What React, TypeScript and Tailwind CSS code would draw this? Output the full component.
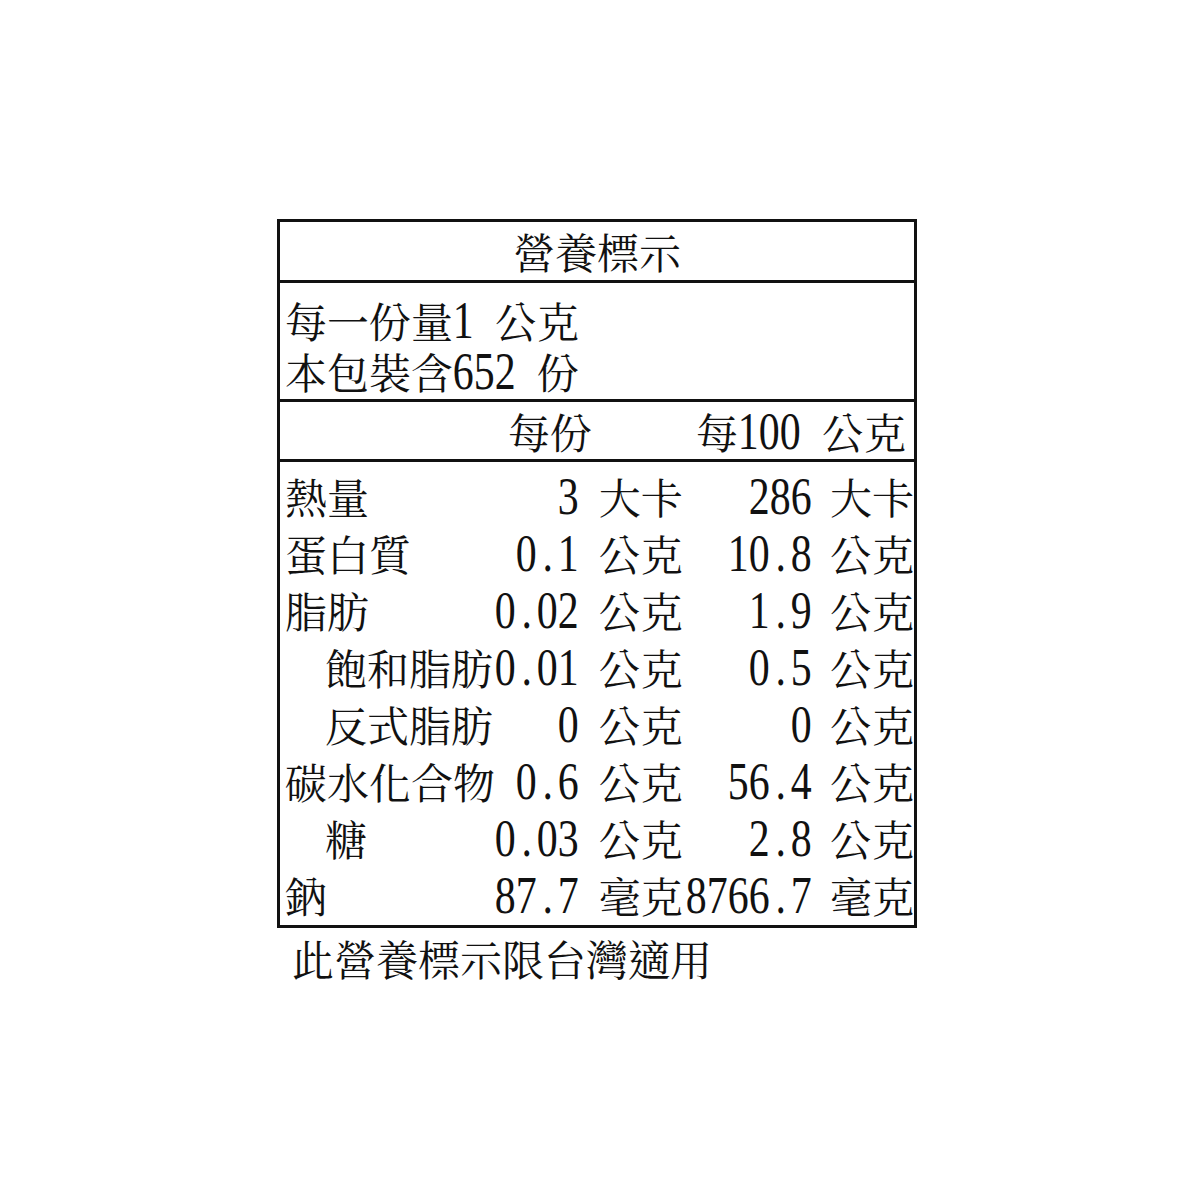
const cjk = "font-['Noto_Serif_CJK_TC','Noto_Sans_CJK_TC',serif]";

function Num({ v }: { v: string }) {
  return (
    <span className="inline-flex items-baseline font-['Liberation_Serif','Times_New_Roman',serif] text-[53px] leading-[44px]">
      {v.split("").map((c, i) => (
        <span key={i} className="flex w-[21px] justify-center">
          <span className="inline-block scale-x-[0.79]">{c === " " ? "\u00a0" : c}</span>
        </span>
      ))}
    </span>
  );
}

type Row = { label: string; indent?: boolean; a: string; ua: string; b: string; ub: string };

const rows: Row[] = [
  { label: "熱量", a: "3", ua: "大卡", b: "286", ub: "大卡" },
  { label: "蛋白質", a: "0.1", ua: "公克", b: "10.8", ub: "公克" },
  { label: "脂肪", a: "0.02", ua: "公克", b: "1.9", ub: "公克" },
  { label: "飽和脂肪", indent: true, a: "0.01", ua: "公克", b: "0.5", ub: "公克" },
  { label: "反式脂肪", indent: true, a: "0", ua: "公克", b: "0", ub: "公克" },
  { label: "碳水化合物", a: "0.6", ua: "公克", b: "56.4", ub: "公克" },
  { label: "糖", indent: true, a: "0.03", ua: "公克", b: "2.8", ub: "公克" },
  { label: "鈉", a: "87.7", ua: "毫克", b: "8766.7", ub: "毫克" },
];

export default function App() {
  return (
    <div className={`min-h-[1200px] w-[1200px] bg-white pl-[277px] pt-[219px] text-[#111] ${cjk} text-[42px]`}>
      <div className="w-[640px] border-[3px] border-[#111]">
        {/* title */}
        <div className="flex h-[61px] items-center justify-center border-b-[3px] border-[#111] leading-none">
          營養標示
        </div>

        {/* servings */}
        <div className="border-b-[3px] border-[#111] pb-[2px] pl-[5px] pt-[12px] leading-[51px]">
          <div className="flex h-[51px] items-baseline">
            <span>每一份量</span>
            <Num v="1 " />
            <span>公克</span>
          </div>
          <div className="flex h-[51px] items-baseline">
            <span>本包裝含</span>
            <Num v="652 " />
            <span>份</span>
          </div>
        </div>

        {/* column headers */}
        <div className="flex h-[60px] items-center border-b-[3px] border-[#111] leading-none">
          <div className="w-[312px] text-right">每份</div>
          <div className="flex flex-1 items-baseline justify-end pr-[8px]">
            <span>每</span>
            <Num v="100 " />
            <span>公克</span>
          </div>
        </div>

        {/* nutrients */}
        <div className="pb-[2px] pt-[5px]">
          {rows.map((r) => (
            <div key={r.label} className="flex h-[57px] items-center leading-none">
              <div className="flex w-[303px] items-baseline pl-[5px]">
                <span className={`whitespace-nowrap ${r.indent ? "pl-[40px]" : ""}`}>{r.label}</span>
                <span className="ml-auto">
                  <Num v={r.a} />
                </span>
              </div>
              <div className="ml-[20px] w-[84px] whitespace-nowrap">{r.ua}</div>
              <div className="flex w-[131px] justify-end">
                <Num v={r.b} />
              </div>
              <div className="ml-[18px] whitespace-nowrap">{r.ub}</div>
            </div>
          ))}
        </div>
      </div>

      <div className="ml-[15px] mt-[5px] leading-[50px]">此營養標示限台灣適用</div>
    </div>
  );
}
